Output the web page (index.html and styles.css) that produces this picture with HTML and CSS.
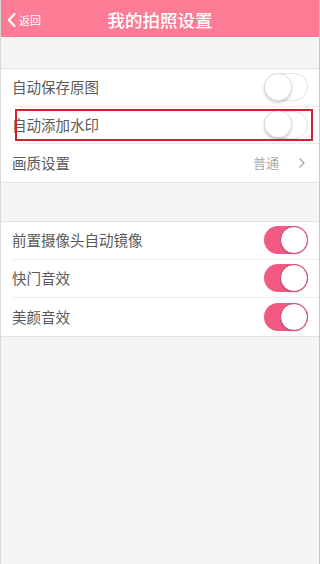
FILE: index.html
```html
<!DOCTYPE html>
<html lang="zh">
<head>
<meta charset="utf-8">
<link rel="stylesheet" href="styles.css">
</head>
<body>
<div class="page">
  <header class="topbar">
    <div class="back">
      <svg class="chev" width="9" height="14" viewBox="0 0 9 14"><path d="M7.5 1 L1.8 7 L7.5 13" fill="none" stroke="#fff" stroke-width="2" stroke-linecap="round" stroke-linejoin="round"/></svg>
      <span>返回</span>
    </div>
    <h1 class="title">我的拍照设置</h1>
    <div></div>
  </header>

  <section class="group first">
    <div class="row"><span class="label">自动保存原图</span><span class="toggle off"><i></i></span></div>
    <div class="row highlighted"><span class="label">自动添加水印</span><span class="toggle off"><i></i></span><span class="mark"></span></div>
    <div class="row"><span class="label">画质设置</span><span class="value">普通<svg class="arrow" width="6" height="10" viewBox="0 0 6 10"><path d="M1 1 L5 5 L1 9" fill="none" stroke="#a8a8a8" stroke-width="1.4" stroke-linecap="round" stroke-linejoin="round"/></svg></span></div>
  </section>

  <section class="group second">
    <div class="row"><span class="label">前置摄像头自动镜像</span><span class="toggle on"><i></i></span></div>
    <div class="row"><span class="label">快门音效</span><span class="toggle on"><i></i></span></div>
    <div class="row"><span class="label">美颜音效</span><span class="toggle on"><i></i></span></div>
  </section>
</div>
</body>
</html>
```

FILE: styles.css
```css
* { box-sizing: border-box; margin: 0; padding: 0; }
html, body { width: 320px; height: 564px; }
body {
  background: #f5f5f5;
  font-family: "Noto Sans CJK SC", "Noto Sans", sans-serif;
  overflow: hidden;
}
.page {
  height: 564px;
  border-left: 1px solid #d8d8d8;
  border-right: 1px solid #c8c8c8;
}
.topbar {
  height: 37px;
  background: #fd7c95;
  display: grid;
  grid-template-columns: 1fr auto 1fr;
  align-items: center;
  color: #fff;
}
.back {
  display: flex;
  align-items: center;
  padding-left: 6px;
  gap: 3px;
  font-size: 11px;
  padding-top: 2px;
}
.title {
  font-size: 17.5px;
  font-weight: 500;
  letter-spacing: 0;
  padding-top: 2px;
}
.group {
  background: #fff;
  border-top: 1px solid #e2e2e2;
  border-bottom: 1px solid #e2e2e2;
}
.group.first { margin-top: 31px; }
.group.second { margin-top: 38px; }
.row {
  position: relative;
  height: 37.5px;
  display: flex;
  align-items: center;
  justify-content: space-between;
  margin-left: 11px;
  padding-right: 11px;
  border-bottom: 1px solid #ececec;
}
.group.second .row { height: 38px; }
.row:last-child { border-bottom: none; }
.label {
  font-size: 14.5px;
  color: #5a5a5a;
  margin-top: -1px;
}
.value {
  display: flex;
  align-items: center;
  gap: 20px;
  font-size: 13px;
  color: #a8a8a8;
  padding-right: 3px;
}
.toggle {
  position: relative;
  width: 44px;
  height: 28px;
  border-radius: 14px;
}
.toggle i {
  position: absolute;
  top: 0;
  width: 28px;
  height: 28px;
  border-radius: 50%;
  background: #fff;
}
.toggle.off {
  background: #fff;
  border: 1.5px solid #e4e4e4;
}
.toggle.off i {
  left: -1.5px;
  top: -1.5px;
  border: 1px solid #e0e0e0;
  box-shadow: 0 2px 3px rgba(0,0,0,0.18);
}
.toggle.on {
  background: #f25a84;
}
.toggle.on i {
  right: 0;
  border: 1.5px solid #c9496c;
  box-shadow: 0 1px 2px rgba(0,0,0,0.15);
}
.mark {
  position: absolute;
  left: 3px;
  right: 6px;
  top: 2px;
  height: 32px;
  border: 2px solid #d3222e;
  pointer-events: none;
}
```
